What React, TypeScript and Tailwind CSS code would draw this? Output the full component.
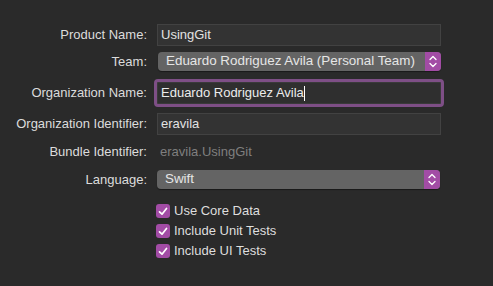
// Project options sheet (dark mode)

const font = { fontFamily: '"Liberation Sans", Arial, sans-serif' };

// Up/down chevrons shown at the right end of a popup button
const PopupArrows = () => (
  <div className="w-[16px] h-full bg-[#a24ca5] rounded-r-[4px] flex items-center justify-center">
    <svg width="8" height="13" viewBox="0 0 8 13" fill="none">
      <path d="M1 4.5 L4 1.5 L7 4.5" stroke="white" strokeWidth="1.3" strokeLinecap="round" strokeLinejoin="round" />
      <path d="M1 8.5 L4 11.5 L7 8.5" stroke="white" strokeWidth="1.3" strokeLinecap="round" strokeLinejoin="round" />
    </svg>
  </div>
);

const Popup = ({ value }: { value: string }) => (
  <div className="w-[283px] h-[19px] rounded-[4px] bg-[#646464] flex items-center shadow-[0_1px_1px_rgba(0,0,0,0.4)]">
    <span className="flex-1 pl-[8px] text-[13.4px] text-[#e6e6e6]">{value}</span>
    <PopupArrows />
  </div>
);

const Field = ({ value }: { value: string }) => (
  <div className="w-[284px] h-[22px] bg-[#333333] border border-[#424242] flex items-center px-[3px] text-[13px] text-[#e2e2e2]">
    {value}
  </div>
);

const Check = ({ label }: { label: string }) => (
  <div className="h-[20px] flex items-center gap-[4px]">
    <div className="w-[14px] h-[14px] rounded-[3px] bg-[#a24ca5] flex items-center justify-center">
      <svg width="10" height="9" viewBox="0 0 10 9" fill="none">
        <path d="M1.5 4.8 L4 7.2 L8.5 1.5" stroke="white" strokeWidth="1.7" strokeLinecap="round" strokeLinejoin="round" />
      </svg>
    </div>
    <span className="text-[13px] text-[#dedede]">{label}</span>
  </div>
);

const Row = ({ label, className, children }: { label: string; className: string; children: React.ReactNode }) => (
  <div className={`flex items-center ${className}`}>
    <div className="w-[148px] text-right text-[13px] text-[#dcdcdc] pr-[1px]">{label}</div>
    <div className="ml-[9px] h-full flex items-center">{children}</div>
  </div>
);

export default function App() {
  return (
    <div className="w-[493px] h-[286px] bg-[#2a2a2a] flex flex-col pt-[24px]" style={font}>
      <Row label="Product Name:" className="h-[22px]">
        <Field value="UsingGit" />
      </Row>
      <Row label="Team:" className="h-[19px] mt-[6px]">
        <div className="ml-[1px]">
          <Popup value="Eduardo Rodriguez Avila (Personal Team)" />
        </div>
      </Row>
      <Row label="Organization Name:" className="h-[22px] mt-[11px]">
        {/* focused text field with ring */}
        <div className="relative">
          <div className="absolute -inset-[3px] rounded-[4px] border-[3px] border-[#7e4f86]" />
          <div className="w-[284px] h-[22px] bg-[#2f2f2f] border border-[#3a3a3a] flex items-center px-[3px] text-[13px] text-[#ececec]">
            Eduardo Rodriguez Avila
            <span className="w-[1px] h-[15px] bg-white" />
          </div>
        </div>
      </Row>
      <Row label="Organization Identifier:" className="h-[22px] mt-[9px]">
        <Field value="eravila" />
      </Row>
      <Row label="Bundle Identifier:" className="h-[22px] mt-[6px]">
        <span className="pl-[3px] text-[13px] text-[#7f7f7f]">eravila.UsingGit</span>
      </Row>
      <Row label="Language:" className="h-[19px] mt-[7px]">
        <Popup value="Swift" />
      </Row>

      {/* Options */}
      <div className="ml-[156px] mt-[12px] flex flex-col">
        <Check label="Use Core Data" />
        <Check label="Include Unit Tests" />
        <Check label="Include UI Tests" />
      </div>
    </div>
  );
}
